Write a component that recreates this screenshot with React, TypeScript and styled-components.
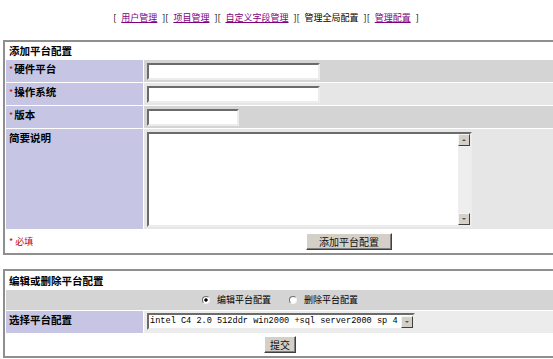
import React from 'react';
import styled, { createGlobalStyle } from 'styled-components';

const GlobalStyle = createGlobalStyle`
  html, body {
    margin: 0;
    padding: 0;
    background: #fff;
    overflow: hidden;
  }
  body {
    font-family: "Noto Sans CJK SC", "Liberation Sans", sans-serif;
    font-size: 9px;
    color: #000;
  }
`;

const colors = {
  border: '#8f8f8f',
  label: '#c6c6e4',
  dark: '#d4d4d4',
  light: '#e6e6e6',
  white: '#ffffff',
  face: '#d4d0c8',
  red: '#cc0000',
  link: '#800080',
};

const Page = styled.div`
  width: 556px;
  padding-left: 3px;
`;

const NavBar = styled.nav`
  display: flex;
  justify-content: center;
  align-items: center;
  height: 12px;
  padding: 12px 30px 16px 0;
  font-size: 9px;
  line-height: 12px;
  white-space: nowrap;
`;

const Bracket = styled.span`
  padding: 0 5px;
`;

const NavLink = styled.a`
  color: ${colors.link};
  text-decoration: underline;
`;

const FormTable = styled.table`
  width: 554px;
  border: 2px solid ${colors.border};
  border-collapse: separate;
  border-spacing: 1px;
  table-layout: fixed;

  & + & {
    margin-top: 14px;
  }
`;

const HeadCell = styled.td<{ $h: number }>`
  height: ${(p) => p.$h}px;
  padding: 0 0 0 3px;
  background: ${colors.white};
  font-size: 10.5px;
  font-weight: bold;
  line-height: ${(p) => p.$h}px;
`;

const LabelCell = styled.td`
  height: 19px;
  padding: 3px 0 0 3px;
  background: ${colors.label};
  font-size: 10.5px;
  font-weight: bold;
  line-height: 12px;
  vertical-align: top;
`;

const Star = styled.span`
  color: ${colors.red};
  font-weight: normal;
  font-size: 9px;
  margin-right: 1px;
`;

const FieldCell = styled.td<{ $bg: string }>`
  padding: 3px 3px 0;
  background: ${(p) => p.$bg};
  vertical-align: top;
`;

const TextInput = styled.input<{ $w: number }>`
  display: block;
  box-sizing: border-box;
  width: ${(p) => p.$w}px;
  height: 17px;
  margin: 0;
  padding: 0 2px;
  border: 2px solid;
  border-color: #6b6b6b #ececec #ececec #6b6b6b;
  background: #fff;
  font: 9px "Noto Sans CJK SC", sans-serif;
  outline: none;
`;

const NoteBox = styled.div`
  display: flex;
  box-sizing: border-box;
  width: 325px;
  height: 95px;
  border: 2px solid;
  border-color: #6b6b6b #ececec #ececec #6b6b6b;
  background: #fff;
`;

const NoteArea = styled.textarea`
  flex: 1;
  margin: 0;
  padding: 2px;
  border: none;
  outline: none;
  resize: none;
  font: 9px "Noto Sans CJK SC", sans-serif;
`;

const ScrollBar = styled.div`
  display: flex;
  flex-direction: column;
  width: 12px;
  background: #eeeeee;
`;

const ScrollTrack = styled.div`
  flex: 1;
`;

const ArrowBtn = styled.div`
  display: flex;
  flex: none;
  align-items: center;
  justify-content: center;
  box-sizing: border-box;
  width: 12px;
  height: 12px;
  background: ${colors.face};
  border: 1px solid;
  border-color: #f4f4f4 #404040 #404040 #f4f4f4;
`;

const Tri = styled.span<{ $dir: 'up' | 'down' }>`
  width: 0;
  height: 0;
  border-left: 2px solid transparent;
  border-right: 2px solid transparent;
  ${(p) =>
    p.$dir === 'up'
      ? 'border-bottom: 2px solid #555;'
      : 'border-top: 2px solid #555;'}
`;

const NoteCell = styled.td`
  height: 22px;
  padding: 0 0 0 3px;
  background: ${colors.white};
  color: ${colors.red};
  font-size: 9px;
  vertical-align: middle;
`;

const CenterCell = styled.td<{ $bg: string; $h: number }>`
  height: ${(p) => p.$h}px;
  padding: 0;
  background: ${(p) => p.$bg};
  text-align: center;
  vertical-align: middle;
`;

const PushButton = styled.button<{ $pad: number }>`
  height: 17px;
  margin: 0;
  padding: 0 ${(p) => p.$pad}px;
  background: ${colors.face};
  border: 1px solid;
  border-color: #ffffff #404040 #404040 #ffffff;
  box-shadow: inset -1px -1px #808080;
  font: 10px "Noto Sans CJK SC", sans-serif;
  line-height: 13px;
  color: #111;
`;

const RadioGroup = styled.div`
  display: inline-flex;
  align-items: center;
  gap: 18px;
  font-size: 9px;
`;

const RadioOption = styled.label`
  display: inline-flex;
  align-items: center;
  gap: 7px;
`;

const RadioDot = styled.span<{ $checked?: boolean }>`
  display: inline-block;
  box-sizing: border-box;
  width: 8px;
  height: 8px;
  border-radius: 50%;
  border: 1px solid;
  border-color: #707070 #f4f4f4 #f4f4f4 #707070;
  background: ${(p) =>
    p.$checked ? 'radial-gradient(circle, #000 0 1.4px, #fff 1.9px)' : '#fff'};
`;

const SelectBox = styled.div`
  display: inline-flex;
  align-items: center;
  box-sizing: border-box;
  height: 17px;
  border: 2px solid;
  border-color: #6b6b6b #ececec #ececec #6b6b6b;
  background: #fff;
`;

const SelectText = styled.span`
  padding: 0 3px 0 1px;
  font-family: "Liberation Mono", monospace;
  font-size: 8.6px;
  line-height: 13px;
  white-space: nowrap;
`;

const SelectCell = styled.td`
  padding: 2px 3px 0;
  background: #ececec;
  vertical-align: top;
`;

const ScrollArrow = ({ dir }: { dir: 'up' | 'down' }) => (
  <ArrowBtn>
    <Tri $dir={dir} />
  </ArrowBtn>
);

const Label = ({ text, required }: { text: string; required?: boolean }) => (
  <LabelCell>
    {required && <Star>*</Star>}
    {text}
  </LabelCell>
);

const navItems = [
  { label: '用户管理', link: true },
  { label: '项目管理', link: true },
  { label: '自定义字段管理', link: true },
  { label: '管理全局配置', link: false },
  { label: '管理配置', link: true },
];

const App: React.FC = () => {
  return (
    <Page>
      <GlobalStyle />
      <NavBar>
        <Bracket>[</Bracket>
        {navItems.map((item, i) => (
          <React.Fragment key={item.label}>
            {i > 0 && <Bracket>][</Bracket>}
            {item.link ? <NavLink href="#">{item.label}</NavLink> : <span>{item.label}</span>}
          </React.Fragment>
        ))}
        <Bracket>]</Bracket>
      </NavBar>

      <FormTable>
        <colgroup>
          <col style={{ width: 137 }} />
          <col />
        </colgroup>
        <tbody>
          <tr>
            <HeadCell colSpan={2} $h={16}>添加平台配置</HeadCell>
          </tr>
          <tr>
            <Label text="硬件平台" required />
            <FieldCell $bg={colors.dark}>
              <TextInput $w={173} />
            </FieldCell>
          </tr>
          <tr>
            <Label text="操作系统" required />
            <FieldCell $bg={colors.light}>
              <TextInput $w={173} />
            </FieldCell>
          </tr>
          <tr>
            <Label text="版本" required />
            <FieldCell $bg={colors.dark}>
              <TextInput $w={92} />
            </FieldCell>
          </tr>
          <tr>
            <LabelCell style={{ height: 97 }}>简要说明</LabelCell>
            <FieldCell $bg={colors.light}>
              <NoteBox>
                <NoteArea />
                <ScrollBar>
                  <ScrollArrow dir="up" />
                  <ScrollTrack />
                  <ScrollArrow dir="down" />
                </ScrollBar>
              </NoteBox>
            </FieldCell>
          </tr>
          <tr>
            <NoteCell>* 必填</NoteCell>
            <CenterCell $bg={colors.white} $h={22}>
              <PushButton $pad={12}>添加平台配置</PushButton>
            </CenterCell>
          </tr>
        </tbody>
      </FormTable>

      <FormTable>
        <colgroup>
          <col style={{ width: 137 }} />
          <col />
        </colgroup>
        <tbody>
          <tr>
            <HeadCell colSpan={2} $h={17}>编辑或删除平台配置</HeadCell>
          </tr>
          <tr>
            <CenterCell colSpan={2} $bg={colors.dark} $h={20}>
              <RadioGroup>
                <RadioOption>
                  <RadioDot $checked />
                  编辑平台配置
                </RadioOption>
                <RadioOption>
                  <RadioDot />
                  删除平台配置
                </RadioOption>
              </RadioGroup>
            </CenterCell>
          </tr>
          <tr>
            <Label text="选择平台配置" />
            <SelectCell>
              <SelectBox>
                <SelectText>intel C4 2.0 512ddr win2000 +sql server2000 sp 4</SelectText>
                <ScrollArrow dir="down" />
              </SelectBox>
            </SelectCell>
          </tr>
          <tr>
            <CenterCell colSpan={2} $bg={colors.white} $h={21}>
              <PushButton $pad={5}>提交</PushButton>
            </CenterCell>
          </tr>
        </tbody>
      </FormTable>
    </Page>
  );
};

export default App;
